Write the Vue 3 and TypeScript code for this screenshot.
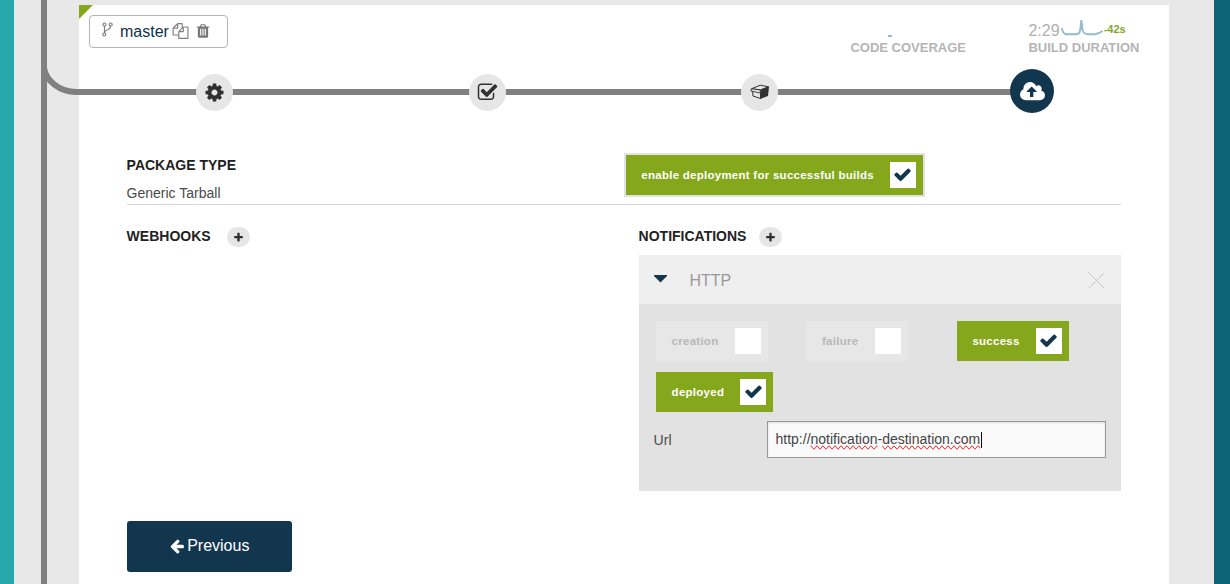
<script setup lang="ts">
import { ref } from 'vue'

interface Toggle { label: string; on: boolean }

const toggles = ref<Toggle[]>([
  { label: 'creation', on: false },
  { label: 'failure', on: false },
  { label: 'success', on: true },
  { label: 'deployed', on: true },
])
const deployEnabled = ref(true)

const icons = {
  check: 'M1671 566q0 40-28 68l-724 724-136 136q-28 28-68 28t-68-28l-136-136-362-362q-28-28-28-68t28-68l136-136q28-28 68-28t68 28l294 295 656-657q28-28 68-28t68 28l136 136q28 28 28 68z',
  plus: 'M1600 736v192q0 40-28 68t-68 28h-416v416q0 40-28 68t-68 28h-192q-40 0-68-28t-28-68v-416h-416q-40 0-68-28t-28-68v-192q0-40 28-68t68-28h416v-416q0-40 28-68t68-28h192q40 0 68 28t28 68v416h416q40 0 68 28t28 68z',
  files: 'M1696 384q40 0 68 28t28 68v1216q0 40-28 68t-68 28h-960q-40 0-68-28t-28-68v-288h-544q-40 0-68-28t-28-68v-672q0-40 20-88t48-76l408-408q28-28 76-48t88-20h416q40 0 68 28t28 68v328q68-40 128-40h416zm-544 213l-299 299h299v-299zm-640-384l-299 299h299v-299zm196 647l316-316v-416h-384v416q0 40-28 68t-68 28h-416v640h512v-256q0-40 20-88t48-76zm956 804v-1152h-384v416q0 40-28 68t-68 28h-416v640h896z',
  trash: 'M704 1376v-704q0-14-9-23t-23-9h-64q-14 0-23 9t-9 23v704q0 14 9 23t23 9h64q14 0 23-9t9-23zm256 0v-704q0-14-9-23t-23-9h-64q-14 0-23 9t-9 23v704q0 14 9 23t23 9h64q14 0 23-9t9-23zm256 0v-704q0-14-9-23t-23-9h-64q-14 0-23 9t-9 23v704q0 14 9 23t23 9h64q14 0 23-9t9-23zm-544-992h448l-48-117q-7-9-17-11h-317q-10 2-17 11zm928 32v64q0 14-9 23t-23 9h-96v948q0 83-47 143.5t-113 60.5h-832q-66 0-113-58.5t-47-141.5v-952h-96q-14 0-23-9t-9-23v-64q0-14 9-23t23-9h309l70-167q15-37 54-63t79-26h320q40 0 79 26t54 63l70 167h309q14 0 23 9t9 23z',
  cog: 'M1024 640q0 106-75 181t-181 75-181-75-75-181 75-181 181-75 181 75 75 181zm512 109v-222q0-12-8-23t-20-13l-185-28q-19-54-39-91 35-50 107-138 10-12 10-25t-9-23q-27-37-99-108t-94-71q-12 0-26 9l-138 108q-44-23-91-38-16-136-29-186-7-28-36-28h-222q-14 0-24.5 8.5t-11.5 21.5l-28 184q-49 16-90 37l-141-107q-10-9-25-9-14 0-25 11-126 114-165 168-7 10-7 23 0 12 8 23 15 21 51 66.500t54 70.500q-27 50-41 99l-183 27q-13 2-21 12.500t-8 23.500v222q0 12 8 23t19 13l186 28q14 46 39 92-40 57-107 138-10 12-10 24 0 10 9 23 26 36 98.500 107.500t94.500 71.500q13 0 26-10l138-107q44 23 91 38 16 136 29 186 7 28 36 28h222q14 0 24.500-8.500t11.500-21.500l28-184q49-16 90-37l142 107q9 9 24 9 13 0 25-10 129-119 165-170 7-8 7-22 0-12-8-23-15-21-51-66.500t-54-70.500q26-50 41-98l183-28q13-2 21-12.500t8-23.500z',
  checkSquare: 'M1472 930v318q0 119-84.500 203.500t-203.500 84.500h-832q-119 0-203.500-84.500t-84.500-203.500v-832q0-119 84.500-203.500t203.500-84.500h832q63 0 117 25 15 7 18 23 3 17-9 29l-49 49q-10 10-23 10-3 0-9-2-23-6-45-6h-832q-66 0-113 47t-47 113v832q0 66 47 113t113 47h832q66 0 113-47t47-113v-254q0-13 9-22l64-64q10-10 23-10 6 0 12 3 20 8 20 29zm231-489l-814 814q-24 24-57 24t-57-24l-430-430q-24-24-24-57t24-57l110-110q24-24 57-24t57 24l263 263 647-647q24-24 57-24t57 24l110 110q24 24 24 57t-24 57z',
  cloudUp: 'M1280 864q0-14-9-23l-352-352q-9-9-23-9t-23 9l-351 351q-10 12-10 24 0 14 9 23t23 9h224v352q0 13 9.500 22.500t22.500 9.500h192q13 0 22.500-9.500t9.500-22.500v-352h224q13 0 22.500-9.500t9.500-22.500zm640 288q0 159-112.500 271.500t-271.500 112.500h-1088q-185 0-316.500-131.500t-131.500-316.500q0-130 70-240t188-165q-2-30-2-43 0-212 150-362t362-150q156 0 285.500 87t188.500 231q71-62 166-62 106 0 181 75t75 181q0 76-41 138 130 31 213.500 135.500t83.500 238.500z',
  arrowLeft: 'M1664 896v128q0 53-32.500 90.500t-84.500 37.500h-704l293 294q38 36 38 90t-38 90l-75 76q-37 37-90 37-52 0-91-37l-651-652q-37-37-37-90 0-52 37-91l651-650q38-38 91-38 52 0 90 38l75 74q38 38 38 91t-38 91l-293 293h704q52 0 84.500 37.500t32.500 90.500z',
}
</script>

<template>
  <div class="page">
    <div class="edge edge-left"></div>
    <div class="gutter gutter-left"></div>
    <main class="card">
      <span class="corner"></span>
      <header class="top">
        <div class="branch">
          <svg class="fork" width="13" height="16" viewBox="0 0 13 16" fill="none" stroke="#808080" stroke-width="1.200">
            <circle cx="3.500" cy="2.500" r="1.500" /><circle cx="9.700" cy="2.500" r="1.500" /><circle cx="3.300" cy="12.500" r="1.500" />
            <path d="M3.500 4V11.300M9.600 4Q9.300 6.800 6.500 7.800Q3.800 8.800 3.500 11" />
          </svg>
          <span class="branch-name">master</span>
          <svg class="files" width="17" height="16" viewBox="0 0 1792 1792" fill="#808080"><path :d="icons.files" /></svg>
          <svg class="trash" width="16" height="16" viewBox="0 0 1792 1792" fill="#777"><path :d="icons.trash" /></svg>
        </div>
        <div class="stats">
          <div class="stat coverage">
            <div class="stat-value"><i class="dash"></i></div>
            <div class="stat-label">CODE COVERAGE</div>
          </div>
          <div class="stat duration">
            <div class="stat-value">
              <span>2:29</span>
              <svg width="42" height="18" viewBox="0 0 42 18" fill="none" stroke="#93bacd" stroke-width="1.900">
                <path d="M1 9Q1.500 14.500 5 15.200H15Q18.500 15.200 19.200 11.500L20.300 1L21.500 10.500Q22 14 24.500 14.600L27 15.200H34Q38 14.900 41.500 12" />
              </svg>
              <b class="delta">-42s</b>
            </div>
            <div class="stat-label">BUILD DURATION</div>
          </div>
        </div>
      </header>

      <nav class="steps">
        <span class="step"><svg width="21" height="21" viewBox="-128 -256 1792 1792" fill="#303030"><path :d="icons.cog" /></svg></span>
        <span class="step"><svg width="21" height="21" viewBox="0 0 1792 1792" fill="#303030"><path :d="icons.checkSquare" /></svg></span>
        <span class="step">
          <svg width="20" height="16" viewBox="0 0 20 16">
            <path d="M2.500 6L10.500 8V14.500L3 12Z" fill="#e6e6e6" stroke="#303030" />
            <path d="M1.500 4.800L10.200 1.200L18.500 2.800L10.500 5.800Z" fill="#e6e6e6" stroke="#303030" />
            <path d="M10.300 5.800L19 2.800L18 12L10.300 15Z" fill="#303030" />
            <path d="M1.500 4.800L10.300 6V9L.8 7Z" fill="#e6e6e6" stroke="#303030" stroke-width=".9" />
          </svg>
        </span>
        <span class="step active"><svg width="25" height="24" viewBox="0 0 1920 1792" fill="#fff"><path :d="icons.cloudUp" /></svg></span>
      </nav>

      <section class="package">
        <div>
          <h2>PACKAGE TYPE</h2>
          <p>Generic Tarball</p>
        </div>
        <button class="toggle on enable" @click="deployEnabled = !deployEnabled">
          <span>enable deployment for successful builds</span>
          <i class="box"><svg v-if="deployEnabled" width="19" height="19" viewBox="0 0 1792 1792" fill="#13364f"><path :d="icons.check" /></svg></i>
        </button>
      </section>

      <section class="columns">
        <div class="column">
          <div class="heading"><h2>WEBHOOKS</h2><button class="add"><svg width="11" height="11" viewBox="0 0 1792 1792" fill="#303030"><path :d="icons.plus" /></svg></button></div>
        </div>
        <div class="column">
          <div class="heading"><h2>NOTIFICATIONS</h2><button class="add"><svg width="11" height="11" viewBox="0 0 1792 1792" fill="#303030"><path :d="icons.plus" /></svg></button></div>
          <article class="panel">
            <div class="panel-head">
              <svg class="caret" width="13" height="8" viewBox="0 0 13 8"><path d="M0 0H13V1L6.500 7.500L0 1Z" fill="#13364f" /></svg>
              <span>HTTP</span>
              <svg class="close" width="17" height="17" viewBox="0 0 17 17" stroke="#c3c5c7" fill="none"><path d="M.5.5L16.500 16.500M16.500.5L.5 16.500" /></svg>
            </div>
            <div class="panel-body">
              <div class="toggles">
                <div v-for="t in toggles" :key="t.label" class="cell">
                  <button class="toggle" :class="{ on: t.on }" @click="t.on = !t.on">
                    <span>{{ t.label }}</span>
                    <i class="box"><svg v-if="t.on" width="19" height="19" viewBox="0 0 1792 1792" fill="#13364f"><path :d="icons.check" /></svg></i>
                  </button>
                </div>
              </div>
              <div class="field">
                <label>Url</label>
                <div class="input">http://<span class="misspelt">notification</span>-<span class="misspelt">destination.com</span><i class="cursor"></i></div>
              </div>
            </div>
          </article>
        </div>
      </section>

      <button class="previous"><svg width="16" height="16" viewBox="0 0 1792 1792" fill="#fff"><path :d="icons.arrowLeft" /></svg>Previous</button>
    </main>
    <div class="gutter gutter-right"></div>
    <div class="edge edge-right"></div>
    <svg class="rail" width="80" height="584" viewBox="0 0 80 584" fill="none" stroke="#808080" stroke-width="6">
      <path d="M44 0V584M44 68C46 81 60 92 76 92H80" />
    </svg>
  </div>
</template>

<style>
body { margin: 0; overflow: hidden; }
</style>

<style scoped>
* { box-sizing: border-box; }
.page { position: relative; display: flex; width: 1230px; height: 584px; background: #e8e8e8; overflow: hidden; font-family: "Liberation Sans", Arial, sans-serif; font-size: 14px; color: #4a4a4a; }
.page svg { display: block; flex: none; }
button { font-family: inherit; border: 0; padding: 0; margin: 0; cursor: pointer; }
h2, p { margin: 0; }
h2 { font-size: 14px; line-height: 16px; color: #222; }
.edge-left { width: 14px; background: #28a6ad; }
.gutter-left { width: 65px; }
.gutter-right { width: 45px; }
.edge-right { width: 16px; background: #0d6476; }
.rail { position: absolute; left: 0; top: 0; }
.card { position: relative; width: 1090px; height: 579px; margin-top: 5px; background: #fff; }
.corner { position: absolute; left: 0; top: 0; border-top: 14px solid #84a71c; border-right: 14px solid transparent; }
.top { display: flex; justify-content: space-between; height: 64px; padding: 10px 29.6px 0 10px; }
.branch { display: flex; align-items: center; width: 139px; height: 33px; padding-left: 11px; border: 1px solid #b4b4b4; border-radius: 4px; background: #fff; }
.fork { margin-top: -4px; }
.branch-name { margin-left: 6px; font-size: 16px; color: #0f3050; }
.files { margin-left: 3px; margin-top: -2px; }
.trash { margin-left: 6px; margin-top: -1px; }
.stats { display: flex; gap: 62.400px; padding-top: 5px; }
.stat-value { display: flex; height: 20px; font-size: 16px; line-height: 21px; color: #b0b0b0; }
.stat-value svg { margin-left: 1.500px; margin-top: -1px; }
.coverage .stat-value { justify-content: center; }
.dash { width: 4px; height: 2px; margin: 15px 36px 0 0; background: #93bacd; }
.delta { margin-left: .6px; font-size: 11px; line-height: 19px; color: #84a71c; }
.stat-label { font-size: 13px; line-height: 15px; font-weight: bold; color: #b5b5b5; white-space: nowrap; }
.steps { display: flex; justify-content: space-between; align-items: center; height: 46px; padding: 0 115px 0 113.500px; background: linear-gradient(#808080, #808080) 0 20px / 953px 6px no-repeat; }
.step { display: flex; align-items: center; justify-content: center; width: 37px; height: 37px; margin: 0 3.500px; border-radius: 50%; background: #e6e6e6; }
.step.active { width: 44px; height: 44px; margin: -2px 0 0; padding: 1px 0 0 0; background: #13364f; }
.package { display: flex; justify-content: space-between; height: 57px; margin: 33px 48px 0 47.600px; padding-right: 196px; border-bottom: 1px solid #d8d8d8; }
.package h2 { margin-top: 9px; }
.package p { margin-top: 12px; line-height: 16px; }
.toggle { display: flex; align-items: center; height: 40px; padding: 0 7px 0 15.600px; background: #e7e7e7; color: #b8b8b8; font-size: 11.490px; letter-spacing: .27px; font-weight: bold; white-space: nowrap; }
.toggle.on { background: #84a71c; color: #fff; }
.box { display: flex; justify-content: center; width: 26px; height: 26px; margin-left: 16px; padding-top: 3px; background: #fff; }
.toggles .box { margin-left: 16.200px; }
.enable { height: 44px; width: 301px; padding: 0 7px 0 15.300px; justify-content: space-between; border: 2px solid #e2e2e2; margin-top: 5px; }
.enable .box { margin-left: 0; padding-right: 1px; }
.columns { display: flex; margin: 0 48px; padding-top: 22px; height: 316px; }
.column:first-child { width: 512px; }
.column:last-child { width: 482px; }
.heading { display: flex; height: 28px; }
.heading h2 { margin-top: 1px; margin-left: -.4px; }
.add { display: flex; align-items: center; justify-content: center; width: 23px; height: 20px; margin-left: 16.400px; border-radius: 10px; background: #e6e6e6; }
.column:last-child .add { margin-left: 12.400px; }
.panel { height: 236px; background: #e2e2e2; }
.panel-head { display: flex; align-items: center; height: 49px; padding: 0 16px 0 15px; background: #efefef; color: #999; font-size: 16px; }
.panel-head span { margin-left: 22.400px; flex: 1; padding-top: 2px; }
.caret { margin-top: -2px; }
.close { margin-top: 1px; }
.panel-body { padding: 17px 15px 0 17px; }
.toggles { display: grid; grid-template-columns: repeat(3, 150.400px); row-gap: 11px; }
.cell { display: flex; }
.field { display: flex; margin-top: 9px; margin-left: -2.400px; }
.field label { width: 113.400px; line-height: 38px; }
.input { display: flex; width: 339px; height: 37px; padding-left: 7.500px; border: 1px solid #999; background: #fafafa; box-shadow: inset 0 1px 2px #ddd; line-height: 35px; white-space: nowrap; color: #444; }
.misspelt { text-decoration-line: spelling-error; }
.cursor { width: 1px; height: 16px; margin: 10px 0 0 1px; background: #111; }
.previous { display: flex; align-items: center; justify-content: center; gap: 2.500px; width: 165px; height: 51px; margin-left: 48px; padding: 0 1px 2px 0; border-radius: 3px; background: #13364f; color: #fff; font-size: 16px; }
</style>
